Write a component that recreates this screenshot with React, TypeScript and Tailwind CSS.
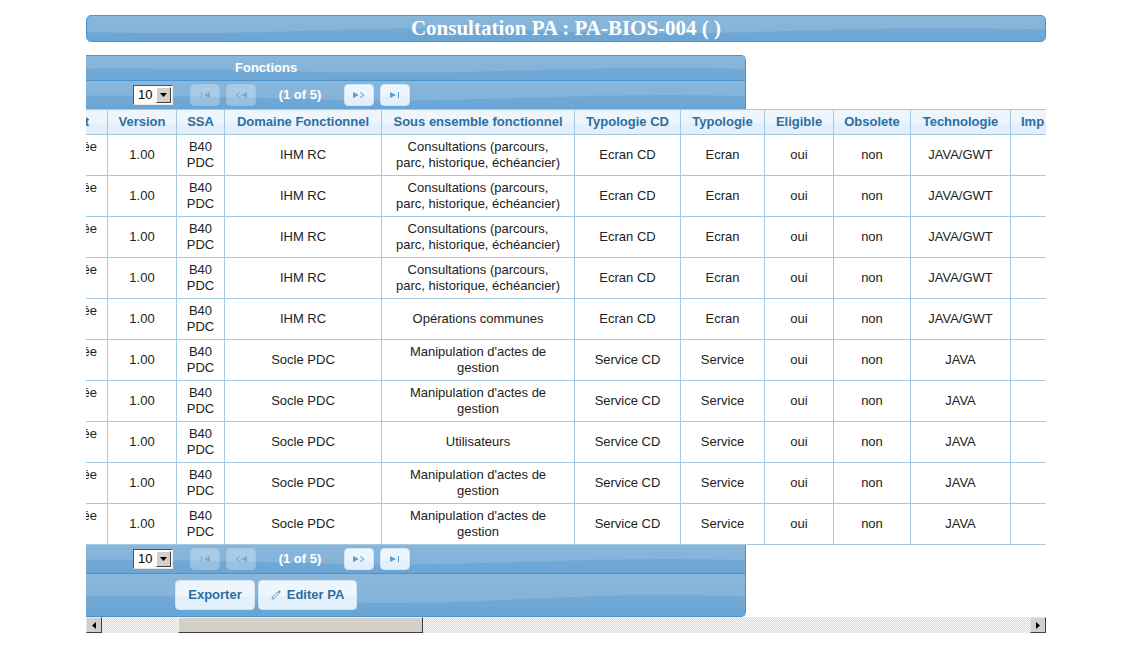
import type { ReactNode } from "react";
import clsx from "clsx";

const COLUMNS = [
  { label: "t", width: "w-[22px]" },
  { label: "Version", width: "w-[69px]" },
  { label: "SSA", width: "w-[48px]" },
  { label: "Domaine Fonctionnel", width: "w-[157px]" },
  { label: "Sous ensemble fonctionnel", width: "w-[193px]" },
  { label: "Typologie CD", width: "w-[106px]" },
  { label: "Typologie", width: "w-[84px]" },
  { label: "Eligible", width: "w-[69px]" },
  { label: "Obsolete", width: "w-[77px]" },
  { label: "Technologie", width: "w-[100px]" },
  { label: "Imp", width: "" },
];

const CONSULT = ["Consultations (parcours,", "parc, historique, échéancier)"];
const MANIP = ["Manipulation d'actes de", "gestion"];

const ihm = (sub: string[]) => ({ domain: "IHM RC", sub, type: "Ecran", tech: "JAVA/GWT" });
const socle = (sub: string[]) => ({ domain: "Socle PDC", sub, type: "Service", tech: "JAVA" });

const ROWS = [
  ihm(CONSULT),
  ihm(CONSULT),
  ihm(CONSULT),
  ihm(CONSULT),
  ihm(["Opérations communes"]),
  socle(MANIP),
  socle(MANIP),
  socle(["Utilisateurs"]),
  socle(MANIP),
  socle(MANIP),
];

const TITLE_WAVE = "M0 64 C30 68 90 70 140 67 C210 63 270 50 350 49 C410 49 450 60 510 67 C560 71 620 69 670 64 C740 56 790 49 850 49 C900 49 930 51 960 54 V100 H0 Z";
const PANEL_WAVE = "M0 53 C50 51 90 53 150 58 C220 66 290 71 350 68 C430 63 490 51 570 50 C610 50 640 52 660 54 V100 H0 Z";

// Blue bar with the glossy wave behind its content
function GlossBar({ wave = "panel", className, children }: { wave?: "title" | "panel"; className?: string; children?: ReactNode }) {
  const isTitle = wave === "title";
  return (
    <div className={clsx("relative overflow-hidden bg-linear-to-b from-[#89b6db] to-[#80b2d9]", className)}>
      <svg
        aria-hidden="true"
        className="absolute inset-0 h-full w-full"
        viewBox={isTitle ? "0 0 960 100" : "0 0 660 100"}
        preserveAspectRatio="none"
      >
        <defs>
          <linearGradient id={`gloss-${wave}`} x1="0" y1="0" x2="0" y2="1">
            <stop offset="0" stopColor="#73a9d4" />
            <stop offset="1" stopColor="#6aa5d5" />
          </linearGradient>
        </defs>
        <path d={isTitle ? TITLE_WAVE : PANEL_WAVE} fill={`url(#gloss-${wave})`} />
      </svg>
      <div className="relative">{children}</div>
    </div>
  );
}

function NavButton({ label, disabled, children }: { label: string; disabled?: boolean; children: ReactNode }) {
  return (
    <button
      type="button"
      aria-label={label}
      disabled={disabled}
      className="flex h-[22px] w-[30px] items-center justify-center rounded-[4px] border border-[#d3e5f4] bg-linear-to-b from-[#edf6fd] from-50% to-[#e3f0fb] to-60% disabled:opacity-35"
    >
      <svg width="12" height="8" viewBox="0 0 12 8" fill="#5f9ccb" stroke="none">
        {children}
      </svg>
    </button>
  );
}

function Paginator({ position }: { position: string }) {
  return (
    <div className="flex h-7 items-center pl-[47px]">
      <div className="relative h-5 w-10 border border-t-[#555] border-r-[#e8e8e8] border-b-[#e8e8e8] border-l-[#555] bg-white">
        <select
          aria-label={`Rows per page, ${position}`}
          defaultValue="10"
          className="block h-full w-full appearance-none bg-white pl-1 text-[13px] leading-4 text-black outline-none"
        >
          <option>10</option>
          <option>20</option>
        </select>
        <span className="pointer-events-none absolute top-px right-px bottom-px flex w-[15px] items-center justify-center border border-t-white border-r-[#404040] border-b-[#404040] border-l-white bg-[#d4d0c8]">
          <svg width="7" height="4" viewBox="0 0 7 4">
            <path d="M0 0H7L3.5 4Z" fill="#000" />
          </svg>
        </span>
      </div>
      <div className="ml-[17px] flex gap-1.5">
        <NavButton label="First page" disabled>
          <path d="M2 1h1v6h-1zM11 1v6L5 4z" />
        </NavButton>
        <NavButton label="Previous page" disabled>
          <path d="M12 1v6L6 4z" />
          <path d="M5 1.5L1 4l4 2.5" fill="none" stroke="#5f9ccb" />
        </NavButton>
      </div>
      <span className="w-[88px] text-center text-[13px] font-bold text-white">(1 of 5)</span>
      <div className="flex gap-1.5">
        <NavButton label="Next page">
          <path d="M0 1v6L6 4z" />
          <path d="M7 1.5L11 4l-4 2.500" fill="none" stroke="#5f9ccb" />
        </NavButton>
        <NavButton label="Last page">
          <path d="M1 1v6L7 4zM9 1h1v6h-1z" />
        </NavButton>
      </div>
    </div>
  );
}

function ActionButton({ className, children }: { className: string; children: ReactNode }) {
  return (
    <button
      type="button"
      className={clsx(
        "flex h-[30px] items-center justify-center rounded-[4px] border border-[#d3e5f4] bg-linear-to-b from-[#edf6fd] from-50% to-[#e3f0fb] to-60% text-[13px] font-bold text-[#2e6e9e]",
        className
      )}
    >
      {children}
    </button>
  );
}

function ScrollButton({ label, path }: { label: string; path: string }) {
  return (
    <button
      type="button"
      aria-label={label}
      className="flex h-4 w-4 shrink-0 items-center justify-center border border-t-[#e8e6e0] border-r-[#404040] border-b-[#404040] border-l-[#e8e6e0] bg-[#d4d0c8]"
    >
      <svg width="4" height="7" viewBox="0 0 4 7">
        <path d={path} fill="#000" />
      </svg>
    </button>
  );
}

function HorizontalScrollbar() {
  return (
    <div className="flex h-4 bg-[repeating-conic-gradient(#ffffff_0_25%,#d9d4d0_0_50%)] bg-[length:2px_2px]">
      <ScrollButton label="Scroll left" path="M4 0V7L0 3.5Z" />
      <div className="flex-1 pl-[76px]">
        <div className="h-4 w-[245px] border border-t-[#f2f0ec] border-r-[#404040] border-b-[#404040] border-l-[#f2f0ec] bg-[#d4d0c8]" />
      </div>
      <ScrollButton label="Scroll right" path="M0 0V7L4 3.5Z" />
    </div>
  );
}

function Cell({ children, first }: { children?: ReactNode; first?: boolean }) {
  return (
    <td
      className={clsx(
        "h-[41px] overflow-hidden border-b border-[#a6c9e2] p-0 whitespace-nowrap not-last:border-r",
        first ? "align-top" : "text-center"
      )}
    >
      {children}
    </td>
  );
}

function FunctionsTable() {
  return (
    <table className="w-full table-fixed border-separate border-spacing-0 text-[13px] leading-4 text-[#222]">
      <thead>
        <tr>
          {COLUMNS.map((c, i) => (
            <th
              key={c.label}
              scope="col"
              className={clsx(
                "h-[26px] overflow-hidden border-y border-[#a6c9e2] bg-linear-to-b from-[#edf5fd] from-50% to-[#e3f0fb] to-60% p-0 font-bold whitespace-nowrap text-[#2e6e9e] not-last:border-r",
                c.width,
                i === COLUMNS.length - 1 && "pl-2.5 text-left"
              )}
            >
              {i === 0 ? <span className="flex justify-end pr-[18px]">{c.label}</span> : c.label}
            </th>
          ))}
        </tr>
      </thead>
      <tbody>
        {ROWS.map((r, i) => (
          <tr key={i}>
            <Cell first>
              <span className="flex justify-end pt-1 pr-2.5">ée</span>
            </Cell>
            <Cell>1.00</Cell>
            <Cell>B40<br />PDC</Cell>
            <Cell>{r.domain}</Cell>
            <Cell>
              {r.sub.map((line) => (
                <span key={line} className="block">{line}</span>
              ))}
            </Cell>
            <Cell>{r.type} CD</Cell>
            <Cell>{r.type}</Cell>
            <Cell>oui</Cell>
            <Cell>non</Cell>
            <Cell>{r.tech}</Cell>
            <Cell />
          </tr>
        ))}
      </tbody>
    </table>
  );
}

export default function App() {
  return (
    <main className="min-h-screen bg-white pt-[15px] pr-[93px] pl-[86px] font-['Liberation_Sans',Arial,sans-serif]">
      <GlossBar wave="title" className="rounded-[5px] border border-[#4b94cb]">
        <h1 className="text-center font-['Liberation_Serif',serif] text-[21px] leading-[25px] font-bold text-white">
          Consultation PA : PA-BIOS-004 ( )
        </h1>
      </GlossBar>

      <section className="mt-[13px] overflow-hidden">
        <div className="w-[660px] overflow-hidden rounded-tr-[5px] border-t border-r border-[#4b94cb]">
          <GlossBar>
            <h2 className="h-6 pl-[149px] text-[13px] leading-6 font-bold text-white">Fonctions</h2>
          </GlossBar>
          <GlossBar className="border-t border-[#4b94cb]">
            <Paginator position="top" />
          </GlossBar>
        </div>

        <FunctionsTable />

        <div className="w-[660px] overflow-hidden rounded-br-[5px] border-r border-b border-[#4b94cb]">
          <GlossBar className="border-b border-[#4b94cb]">
            <Paginator position="bottom" />
          </GlossBar>
          <GlossBar>
            <div className="flex h-[42px] items-center gap-[3px] pl-[89px]">
              <ActionButton className="w-20">Exporter</ActionButton>
              <ActionButton className="w-[99px] gap-1.5">
                <svg width="10" height="10" viewBox="0 0 10 10" fill="none" stroke="#5f9ccb">
                  <path d="M1 9L1.500 7L6.500 2L8 3.500L3 8.500Z" />
                  <path d="M7.500 1L9 2.500" strokeWidth="2" />
                </svg>
                Editer PA
              </ActionButton>
            </div>
          </GlossBar>
        </div>

        <HorizontalScrollbar />
      </section>
    </main>
  );
}
